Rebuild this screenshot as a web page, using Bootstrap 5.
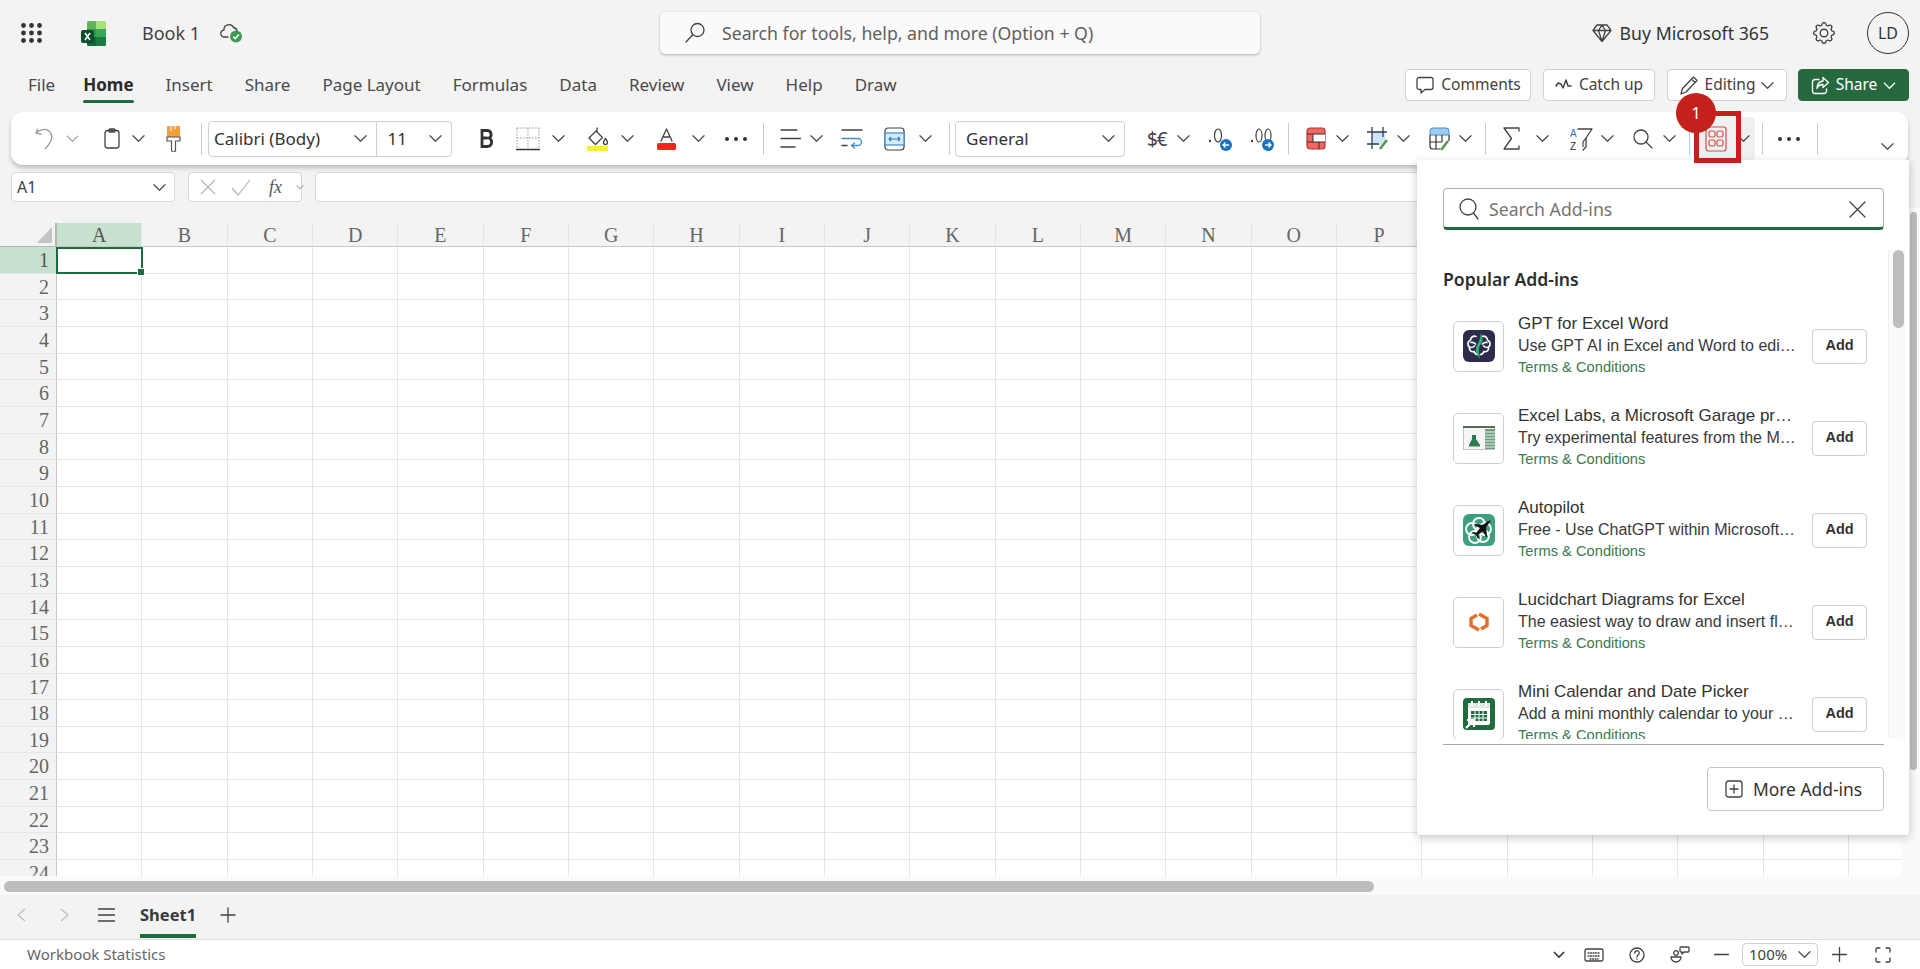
<!DOCTYPE html>
<html lang="en">
<head>
    <meta charset="UTF-8">
    <title>Book 1 - Excel</title>
    <link href="https://cdn.jsdelivr.net/npm/bootstrap@5.3.3/dist/css/bootstrap.min.css" rel="stylesheet">
    <style>
        body {
            width: 1920px;
            height: 969px;
            overflow: hidden;
            background: #f3f3f3;
            color: #424242;
            font-family: "Noto Sans", "Open Sans", sans-serif;
            font-size: 17px;
            position: relative;
        }

        svg { flex: none; display: block; }
        .ic { fill: none; stroke: #424242; stroke-width: 1.3; stroke-linecap: round; stroke-linejoin: round; }
        .ic-muted { stroke: #9a9a9a; }
        .chev { width: 13px; height: 13px; }
        .sep { width: 1px; height: 32px; background: #c8c8c8; }

        /* title bar */
        .titlebar { height: 66px; padding-left: 21px; padding-right: 11px; }
        .excel-logo { margin-left: 39px; }
        .book-name { font-size: 18px; margin-left: 35px; margin-right: 20px; }
        .title-left { width: 639px; }
        .global-search {
            width: 600px;
            height: 42px;
            background: #fafafa;
            border-radius: 5px;
            box-shadow: 0 1px 3px rgba(0, 0, 0, .28);
            padding-left: 24px;
            color: #616161;
            font-size: 17.7px;
        }
        .buy { font-size: 17.7px; margin-right: 44px; color: #333; }
        .avatar {
            width: 42px;
            height: 42px;
            border: 1px solid #333;
            border-radius: 50%;
            margin-left: 32px;
            font-size: 16px;
            color: #333;
        }

        /* tabs row */
        .tabrow { height: 46px; padding: 0 11px 8px 28px; }
        .tab { position: relative; margin-right: 32px; line-height: 34px; color: #4a4a4a; }
        .tab:first-child { margin-right: 28px; }
        .tab.active { font-weight: 700; color: #2b2b2b; }
        .tab.active::after {
            content: "";
            position: absolute;
            left: 0;
            right: 0;
            bottom: -1px;
            height: 3px;
            border-radius: 2px;
            background: #1f6b3f;
        }
        .btn-bar {
            height: 32px;
            padding: 0;
            background: #fff;
            border: 1px solid #d1d1d1;
            border-radius: 4px;
            font-size: 15.5px;
            color: #424242;
            gap: 6px;
        }
        .btn-comments { width: 126px; }
        .btn-catch { width: 112px; margin-left: 12px; }
        .btn-editing { width: 120px; margin-left: 12px; }
        .btn-share { width: 111px; margin-left: 11px; background: #27693f; border-color: #27693f; color: #fff; }
        .btn-share:hover { background: #27693f; color: #fff; }
        .btn-share .ic { stroke: #fff; }

        /* ribbon */
        .ribbon {
            display: grid;
            grid-template-columns: 31px 38px 28px 34px 35px 7px 272px 36px 36px 35px 34px 36px 35px 32px 39px 17px 30px 31px 43px 35px 30px 6px 192px 30px 31px 42px 38px 18px 30px 31px 30px 32px 30px 26px 18px 33px 34px 31px 32px 30px 26px 16px 32px 25px 15px 40px 64px 20px;
            align-items: center;
            justify-items: start;
            margin-left: 11px;
            width: 1897px;
            height: 53px;
            padding-left: 24px;
            background: #fff;
            border-radius: 12px;
            box-shadow: 0 3px 4px rgba(0, 0, 0, .22);
        }
        .combo {
            height: 36px;
            background: #fff;
            border: 1px solid #cfcfcf;
            border-radius: 4px;
            color: #333;
        }
        .font-combo { width: 244px; }
        .font-combo > div { padding: 0 9px 0 5px; }
        .font-name { width: 169px; border-right: 1px solid #cfcfcf; }
        .font-size { width: 75px; padding-left: 11px !important; }
        .num-combo { width: 170px; padding: 0 9px 0 10px; }
        .hover-tile {
            grid-column: span 2;
            margin-left: -7px;
            width: 57px;
            height: 43px;
            padding-left: 7px;
            gap: 10px;
            background: #f0f0f0;
            border-radius: 4px;
        }
        .ribbon-text { font-size: 19px; line-height: 20px; letter-spacing: -1px; color: #424242; }

        /* formula bar */
        .formula { margin-top: 7px; height: 30px; padding-left: 11px; gap: 13px; }
        .fbox {
            height: 30px;
            background: #fff;
            border: 1px solid #d6d6d6;
            border-radius: 4px;
            font-size: 16px;
        }
        .namebox { width: 164px; padding: 0 8px 0 5px; }
        .fxbox { width: 114px; padding: 0 4px 0 10px; gap: 14px; color: #555; }
        .formula-input { flex: 1; margin-right: 12px; }
        .fx { font-family: "Liberation Serif", serif; font-style: italic; font-size: 18px; margin-left: 4px; }

        /* sheet */
        .workarea { margin-top: 6px; height: 668px; }
        .grid-col { width: 1901px; padding-top: 15px; position: relative; }
        .vstrip { width: 19px; background: #fafafa; padding: 4px 2px 0 9px; }
        .vthumb { width: 7px; height: 558px; background: #bdbdbd; border-radius: 4px; }
        .sheet {
            display: grid;
            grid-template-columns: 57px repeat(22, 85.33px);
            grid-template-rows: 24px repeat(24, 26.67px);
            height: 653px;
            overflow: hidden;
            font-family: "Liberation Serif", serif;
            font-size: 20px;
            color: #666;
        }
        .sheet > div { box-sizing: border-box; }
        .corner { position: relative; border-right: 2px solid #b5b5b5; border-bottom: 1px solid #b5b5b5; }
        .corner::before {
            content: "";
            position: absolute;
            right: -2px;
            top: -15px;
            height: 15px;
            border-right: 2px solid #b5b5b5;
        }
        .corner::after {
            content: "";
            position: absolute;
            left: 37px;
            top: 4px;
            border-left: 15px solid transparent;
            border-bottom: 16px solid #c4c4c4;
        }
        .col-h { text-align: center; line-height: 24px; border-bottom: 1px solid #c8c8c8; border-right: 1px solid #e6e6e6; }
        .row-h { text-align: right; padding-right: 7px; line-height: 27px; border-right: 1px solid #c8c8c8; border-bottom: 1px solid #e6e6e6; }
        .cell { background: #fff; border-right: 1px solid #e6e6e6; border-bottom: 1px solid #e6e6e6; }
        .sel-h { background: #c6e2cf; color: #555; }
        .cell.sel { border: 2px solid #1f6b3f; position: relative; margin: 0 -1px 0 -1px; }
        .cell.sel::after {
            content: "";
            position: absolute;
            right: -4px;
            bottom: -4px;
            width: 6px;
            height: 6px;
            background: #1f6b3f;
            border: 1px solid #fff;
            box-sizing: content-box;
        }
        .hstrip { height: 19px; background: #fafafa; padding: 5px 0 0 4px; }
        .hthumb { width: 1370px; height: 11px; background: #bdbdbd; border-radius: 6px; }

        /* sheet tabs and status bar */
        .sheetbar { height: 44px; padding: 0 0 4px 17px; }
        .sheet-next { margin-left: 34px; }
        .sheet-menu { margin-left: 29px; }
        .sheet-add { margin-left: 24px; }
        .sheet-tab { position: relative; font-weight: 700; font-size: 16.5px; line-height: 34px; margin-left: 25px; color: #3a3a3a; }
        .sheet-tab::after {
            content: "";
            position: absolute;
            left: 0;
            right: 0;
            bottom: -6px;
            height: 4px;
            background: #1f6b3f;
        }
        .statusbar {
            height: 30px;
            background: #fff;
            border-top: 1px solid #dedede;
            padding-left: 27px;
            font-size: 15px;
            color: #666;
        }
        .st-kb { margin-left: 19px; }
        .st-help, .st-people { margin-left: 25px; }
        .st-minus { margin-left: 24px; }
        .st-plus { margin-left: 14px; }
        .st-full { margin: 0 29px 0 28px; }
        .zoom-box {
            width: 76px;
            height: 23px;
            margin-left: 13px;
            border: 1px solid #d1d1d1;
            border-radius: 4px;
            padding: 0 6px;
            font-size: 15px;
            color: #424242;
        }

        /* add-ins panel */
        .addin-panel {
            position: absolute;
            left: 1417px;
            top: 160px;
            width: 492px;
            height: 675px;
            background: #fff;
            border-radius: 0 0 4px 4px;
            box-shadow: 0 3px 10px rgba(0, 0, 0, .22);
            z-index: 5;
            padding-top: 28px;
        }
        .panel-search {
            margin: 0 25px 0 26px;
            height: 42px;
            border: 1px solid #b4b4b4;
            border-bottom: 3px solid #1f6b3f;
            border-radius: 4px;
            padding: 2px 17px 0 15px;
            color: #757575;
            font-size: 17.7px;
            gap: 10px;
        }
        .addin-scroll { height: 489px; margin-top: 20px; }
        .addin-list { width: 471px; overflow: hidden; }
        .addin-track { width: 17px; background: #fafafa; border-left: 1px solid #efefef; padding: 0 1px 0 4px; }
        .addin-thumb { width: 11px; height: 78px; background: #bdbdbd; border-radius: 6px; }
        .addin-head { font-size: 17.6px; font-weight: 600; color: #2e2e2e; padding: 17px 0 0 26px; height: 50px; line-height: 24px; }
        .addin {
            height: 92px;
            padding-left: 36px;
            gap: 14px;
            font-family: "Liberation Sans", Arial, sans-serif;
        }
        .addin-icon {
            width: 51px;
            height: 51px;
            border: 1.5px solid #cfcfcf;
            border-radius: 5px;
            background: #fff;
        }
        .addin-text { width: 280px; margin-top: -3px; white-space: nowrap; }
        .addin-title { font-size: 17px; line-height: 23px; color: #333; }
        .addin-desc { font-size: 16px; line-height: 22px; color: #3a3a3a; }
        .addin-terms { font-size: 14.7px; line-height: 21px; color: #3b7a54; }
        .btn-add {
            width: 55px;
            height: 35px;
            padding: 0;
            background: #fff;
            border: 1.5px solid #cfcfcf;
            border-radius: 4px;
            font-size: 14.5px;
            font-weight: 700;
            color: #333;
        }
        .panel-rule { margin: 5px 25px 0 26px; border-top: 1px solid #a8a8a8; }
        .btn-more {
            width: 177px;
            height: 44px;
            margin: 22px 25px 0 auto;
            padding: 0 4px 0 0;
            gap: 10px;
            background: #fff;
            border: 1px solid #c4c4c4;
            border-radius: 4px;
            font-size: 17.4px;
            color: #333;
        }

        /* step marker */
        .step-box {
            position: absolute;
            left: 1694px;
            top: 111px;
            width: 47px;
            height: 52px;
            border: 5px solid #c4201c;
            z-index: 6;
        }
        .step-num {
            position: absolute;
            left: 1676px;
            top: 93px;
            width: 40px;
            height: 40px;
            border-radius: 50%;
            background: #c4201c;
            color: #fff;
            font-size: 17px;
            z-index: 7;
        }
    </style>
</head>
<body>

<svg width="0" height="0" class="position-absolute">
    <symbol id="chev" viewBox="0 0 14 14"><path d="M1 4l6 6 6-6" fill="none" stroke="#4a4a4a" stroke-width="1.3" stroke-linecap="round" stroke-linejoin="round"/></symbol>
</svg>

<header class="titlebar d-flex align-items-center">
    <div class="title-left d-flex align-items-center">
        <svg width="21" height="20" viewBox="0 0 21 20" fill="#333">
            <circle cx="2.5" cy="2.5" r="2.4"/><circle cx="10.5" cy="2.5" r="2.4"/><circle cx="18.5" cy="2.5" r="2.4"/>
            <circle cx="2.5" cy="10" r="2.4"/><circle cx="10.5" cy="10" r="2.4"/><circle cx="18.5" cy="10" r="2.4"/>
            <circle cx="2.5" cy="17.5" r="2.4"/><circle cx="10.5" cy="17.5" r="2.4"/><circle cx="18.5" cy="17.5" r="2.4"/>
        </svg>
        <svg class="excel-logo" width="26" height="25" viewBox="0 0 26 25">
            <path d="M6 1.500A1.500 1.500 0 0 1 7.500 0H15v8H6z" fill="#5fb35a"/>
            <path d="M15 0h8.500A1.500 1.500 0 0 1 25 1.500V8H15z" fill="#a6e07a"/>
            <rect x="6" y="8" width="9" height="8" fill="#2f9a52"/>
            <rect x="15" y="8" width="10" height="8" fill="#3ba85a"/>
            <path d="M6 16h9v9H7.500A1.500 1.500 0 0 1 6 23.500z" fill="#15663a"/>
            <path d="M15 16h10v7.500a1.500 1.500 0 0 1-1.500 1.500H15z" fill="#1a7a42"/>
            <rect x="0" y="9" width="13" height="13" rx="2" fill="#0c4f2b"/>
            <path d="M4 12l5 7M9 12l-5 7" stroke="#fff" stroke-width="1.600"/>
        </svg>
        <span class="book-name">Book 1</span>
        <svg width="23" height="20" viewBox="0 0 23 20">
            <path class="ic" d="M8 14H4.500a3.500 3.500 0 0 1-.5-7A5 5 0 0 1 13.500 4.500 4 4 0 0 1 17 8"/>
            <circle cx="16" cy="13.500" r="6" fill="#3f9a55"/>
            <path d="M13.300 13.700l2 1.900 3.600-4" fill="none" stroke="#fff" stroke-width="1.500"/>
        </svg>
    </div>
    <div class="global-search d-flex align-items-center gap-3">
        <svg class="ic" width="22" height="22" viewBox="0 0 22 22"><circle cx="13.500" cy="8" r="6.500"/><path d="M8.800 12.700L2 20"/></svg>
        <span>Search for tools, help, and more (Option + Q)</span>
    </div>
    <div class="ms-auto d-flex align-items-center">
        <svg class="ic me-2" width="20" height="20" viewBox="0 0 20 20"><path d="M5 2h10l4 5.500L10 18.500 1 7.500zM1 7.500h18M6.500 7.500L10 18.500l3.500-11M6.500 7.500L10 2l3.500 5.500"/></svg>
        <span class="buy">Buy Microsoft 365</span>
        <svg width="22" height="22" viewBox="0 0 16 16" fill="#424242">
            <path d="M8 4.754a3.246 3.246 0 1 0 0 6.492 3.246 3.246 0 0 0 0-6.492zM5.754 8a2.246 2.246 0 1 1 4.492 0 2.246 2.246 0 0 1-4.492 0z"/>
            <path d="M9.796 1.343c-.527-1.790-3.065-1.790-3.592 0l-.094.319a.873.873 0 0 1-1.255.520l-.292-.160c-1.640-.892-3.433.902-2.540 2.541l.159.292a.873.873 0 0 1-.520 1.255l-.319.094c-1.790.527-1.790 3.065 0 3.592l.319.094a.873.873 0 0 1 .520 1.255l-.160.292c-.892 1.640.901 3.434 2.541 2.540l.292-.159a.873.873 0 0 1 1.255.520l.094.319c.527 1.790 3.065 1.790 3.592 0l.094-.319a.873.873 0 0 1 1.255-.520l.292.160c1.640.893 3.434-.902 2.540-2.541l-.159-.292a.873.873 0 0 1 .520-1.255l.319-.094c1.790-.527 1.790-3.065 0-3.592l-.319-.094a.873.873 0 0 1-.520-1.255l.160-.292c.893-1.640-.902-3.433-2.541-2.540l-.292.159a.873.873 0 0 1-1.255-.520l-.094-.319zm-2.633.283c.246-.835 1.428-.835 1.674 0l.094.319a1.873 1.873 0 0 0 2.693 1.115l.291-.160c.764-.415 1.600.420 1.184 1.185l-.159.292a1.873 1.873 0 0 0 1.116 2.692l.318.094c.835.246.835 1.428 0 1.674l-.319.094a1.873 1.873 0 0 0-1.115 2.693l.160.291c.415.764-.420 1.600-1.185 1.184l-.291-.159a1.873 1.873 0 0 0-2.693 1.116l-.094.318c-.246.835-1.428.835-1.674 0l-.094-.319a1.873 1.873 0 0 0-2.692-1.115l-.292.160c-.764.415-1.600-.420-1.184-1.185l.159-.291A1.873 1.873 0 0 0 1.945 8.930l-.319-.094c-.835-.246-.835-1.428 0-1.674l.319-.094A1.873 1.873 0 0 0 3.060 4.377l-.160-.292c-.415-.764.420-1.600 1.185-1.184l.292.159a1.873 1.873 0 0 0 2.692-1.115l.094-.319z"/>
        </svg>
        <div class="avatar d-flex align-items-center justify-content-center">LD</div>
    </div>
</header>

<div class="tabrow d-flex align-items-center">
    <span class="tab">File</span>
    <span class="tab active">Home</span>
    <span class="tab">Insert</span>
    <span class="tab">Share</span>
    <span class="tab">Page Layout</span>
    <span class="tab">Formulas</span>
    <span class="tab">Data</span>
    <span class="tab">Review</span>
    <span class="tab">View</span>
    <span class="tab">Help</span>
    <span class="tab">Draw</span>
    <div class="ms-auto d-flex align-items-center">
        <button class="btn btn-bar btn-comments d-flex align-items-center justify-content-center">
            <svg class="ic" width="20" height="20" viewBox="0 0 20 20"><path d="M4 2.500h12a2 2 0 0 1 2 2v8a2 2 0 0 1-2 2h-6l-4 3.500v-3.500H4a2 2 0 0 1-2-2v-8a2 2 0 0 1 2-2z"/></svg>
            Comments
        </button>
        <button class="btn btn-bar btn-catch d-flex align-items-center justify-content-center">
            <svg class="ic" width="18" height="14" viewBox="0 0 18 14"><path d="M1 8l2-3 3 1 2 4 3-8 2 6h3" stroke-width="1.500"/></svg>
            Catch up
        </button>
        <button class="btn btn-bar btn-editing d-flex align-items-center justify-content-center">
            <svg class="ic" width="19" height="20" viewBox="0 0 19 20"><path d="M13.500 2l3.500 3.500L6 17l-5 2 1.500-5.500zM11.500 4l3.500 3.500"/></svg>
            Editing
            <svg class="chev"><use href="#chev"/></svg>
        </button>
        <button class="btn btn-bar btn-share d-flex align-items-center justify-content-center">
            <svg class="ic" width="19" height="19" viewBox="0 0 19 19"><path d="M8 3.500H4a2.500 2.500 0 0 0-2.500 2.500v9A2.500 2.500 0 0 0 4 17.500h9a2.500 2.500 0 0 0 2.500-2.500v-2M12 1.500l5.500 5-5.500 5V8.500c-3 0-5 1-6 4 0-4 2-7 6-7.500z"/></svg>
            Share
            <svg class="chev" viewBox="0 0 14 14"><path d="M1 4l6 6 6-6" fill="none" stroke="#fff" stroke-width="1.300"/></svg>
        </button>
    </div>
</div>

<div class="ribbon">
    <svg class="ic ic-muted" width="19" height="23" viewBox="0 0 19 23"><path d="M1 6l1.500-4M1 6l5 1M1.500 5.500C5 2.500 11 1 14.500 4.500c4 4 2.500 10-4 17"/></svg>
    <svg class="chev" viewBox="0 0 14 14"><path d="M1 4l6 6 6-6" fill="none" stroke="#aaa" stroke-width="1.300"/></svg>
    <svg class="ic" width="16" height="21" viewBox="0 0 16 21"><rect x="1" y="2.500" width="14" height="17.500" rx="2.500"/><rect x="5" y="1" width="6" height="3" rx="1"/></svg>
    <svg class="chev"><use href="#chev"/></svg>
    <svg width="15" height="27" viewBox="0 0 15 27">
        <path d="M1 1h13v11H1z" fill="#f0a03c"/><path d="M5 1v5M9 1v3" stroke="#fff" stroke-width="1"/>
        <path d="M1 12h13v4H9.500v9a2 2 0 0 1-4 0v-9H1z" fill="#fff" stroke="#555" stroke-width="1.200"/>
    </svg>
    <div class="sep"></div>
    <div class="combo font-combo d-flex">
        <div class="font-name d-flex align-items-center justify-content-between">Calibri (Body)<svg class="chev"><use href="#chev"/></svg></div>
        <div class="font-size d-flex align-items-center justify-content-between">11<svg class="chev"><use href="#chev"/></svg></div>
    </div>
    <svg width="14" height="19" viewBox="0 0 14 19"><path d="M2 1.500h5.500a4 4 0 0 1 1.500 7.500 4.500 4.500 0 0 1-1 8.500H2z M2 9h5.500" fill="none" stroke="#333" stroke-width="2.800"/></svg>
    <svg width="24" height="24" viewBox="0 0 24 24">
        <path d="M1 1h22M1 1v20M23 1v20M12 1v20M1 11h22" stroke="#999" stroke-width="1" stroke-dasharray="1.500 1.500" fill="none"/>
        <path d="M0 22.500h24" stroke="#333" stroke-width="1.500"/>
    </svg>
    <svg class="chev"><use href="#chev"/></svg>
    <svg width="21" height="25" viewBox="0 0 21 25">
        <path class="ic" d="M10 2v4M9 5l-7 7 6.500 6.500 7-7zM18.500 12.500c1.500 2 2 3 2 4a2 2 0 0 1-4 0c0-1 .5-2 2-4z"/>
        <rect x="0" y="20" width="21" height="5" fill="#f4ee3c"/>
    </svg>
    <svg class="chev"><use href="#chev"/></svg>
    <svg width="19" height="23" viewBox="0 0 19 23">
        <path class="ic" d="M4 14l5.500-12L15 14M6 10h7"/>
        <rect x="0" y="16" width="19" height="7" rx="1.500" fill="#e8291c"/>
    </svg>
    <svg class="chev"><use href="#chev"/></svg>
    <svg width="24" height="6" viewBox="0 0 24 6" fill="#333"><circle cx="3" cy="3" r="2"/><circle cx="12" cy="3" r="2"/><circle cx="21" cy="3" r="2"/></svg>
    <div class="sep"></div>
    <svg class="ic" width="21" height="21" viewBox="0 0 21 21"><path d="M1 2h16M1 10.500h20M1 19h14"/></svg>
    <svg class="chev"><use href="#chev"/></svg>
    <svg width="22" height="21" viewBox="0 0 22 21" fill="none" stroke-linecap="round">
        <path d="M1 2h20" stroke="#424242" stroke-width="1.300"/>
        <path d="M1 10.500h16a3.500 3.500 0 0 1 0 7h-6M13.500 15l-3 2.500 3 2.500" stroke="#3d8ccf" stroke-width="1.300"/>
        <path d="M1 17.500h5" stroke="#424242" stroke-width="1.300"/>
    </svg>
    <svg width="21" height="24" viewBox="0 0 21 24" fill="none">
        <rect x="1" y="1" width="19" height="22" rx="3" stroke="#424242" stroke-width="1.200"/>
        <rect x="1" y="6" width="19" height="12" fill="#d5e8f8" stroke="#3d8ccf" stroke-width="1.200"/>
        <path d="M5 12h11M5 12l2-2M5 12l2 2M16 12l-2-2M16 12l-2 2" stroke="#2d78bd" stroke-width="1.200"/>
    </svg>
    <svg class="chev"><use href="#chev"/></svg>
    <div class="sep"></div>
    <div class="combo num-combo d-flex align-items-center justify-content-between">General<svg class="chev"><use href="#chev"/></svg></div>
    <span class="ribbon-text">$€</span>
    <svg class="chev"><use href="#chev"/></svg>
    <svg width="24" height="24" viewBox="0 0 24 24">
        <circle cx="2" cy="14" r="1.200" fill="#424242"/>
        <ellipse cx="10" cy="8.500" rx="3.500" ry="6.500" fill="none" stroke="#424242" stroke-width="1.200"/>
        <circle cx="18" cy="18" r="6" fill="#1a73c0"/>
        <path d="M21 18h-6M17.500 15.500L15 18l2.500 2.500" fill="none" stroke="#fff" stroke-width="1.300"/>
    </svg>
    <svg width="24" height="24" viewBox="0 0 24 24">
        <circle cx="2" cy="14" r="1.200" fill="#424242"/>
        <ellipse cx="9" cy="8.500" rx="3" ry="6.500" fill="none" stroke="#424242" stroke-width="1.200"/>
        <ellipse cx="18" cy="8.500" rx="3" ry="6.500" fill="none" stroke="#424242" stroke-width="1.200"/>
        <circle cx="18" cy="18" r="6" fill="#1a73c0"/>
        <path d="M15 18h6M18.500 15.500L21 18l-2.500 2.500" fill="none" stroke="#fff" stroke-width="1.300"/>
    </svg>
    <div class="sep"></div>
    <svg width="20" height="23" viewBox="0 0 20 23">
        <rect x="1" y="1" width="18" height="21" rx="3" fill="#f6645f" stroke="#a83a36" stroke-width="1.200"/>
        <rect x="7" y="7" width="12" height="8" fill="#fff"/>
        <path d="M1 7h18M1 15h18M7 7v8M13 15v7" stroke="#333" stroke-width="1"/>
    </svg>
    <svg class="chev"><use href="#chev"/></svg>
    <svg width="22" height="24" viewBox="0 0 22 24">
        <rect x="5" y="5" width="13" height="13" fill="#cfe4f7"/>
        <path d="M5 0v22M16 0v10M0 5h20M0 17h12" stroke="#2f3e55" stroke-width="1.300" fill="none"/>
        <path d="M13 22l7-9" stroke="#4a9a45" stroke-width="2.400"/>
    </svg>
    <svg class="chev"><use href="#chev"/></svg>
    <svg width="21" height="24" viewBox="0 0 21 24">
        <path d="M1 4a3 3 0 0 1 3-3h13a3 3 0 0 1 3 3v4H1z" fill="#9fcdf0" stroke="#3d8ccf"/>
        <path d="M20 8v6M1 8v11a3 3 0 0 0 3 3h7M1 15h12M7 8v14M13 8v7" stroke="#333" stroke-width="1.200" fill="none"/>
        <path d="M12 23l7-9" stroke="#4a9a45" stroke-width="2.400"/>
    </svg>
    <svg class="chev"><use href="#chev"/></svg>
    <div class="sep"></div>
    <svg class="ic" width="17" height="23" viewBox="0 0 17 23"><path d="M16 4V1H1l7.500 10.500L1 22h15v-3"/></svg>
    <svg class="chev"><use href="#chev"/></svg>
    <svg width="23" height="24" viewBox="0 0 23 24" fill="none">
        <path class="ic" d="M8 2h14l-6 9v9l-3 3"/>
        <path d="M16 11l-3 4v5" stroke="#424242" stroke-width="1.200"/>
        <text x="0" y="10" font-size="10" font-family="Liberation Sans, sans-serif" fill="#2d78bd">A</text>
        <text x="0" y="23" font-size="10" font-family="Liberation Sans, sans-serif" fill="#333">Z</text>
    </svg>
    <svg class="chev"><use href="#chev"/></svg>
    <svg class="ic" width="20" height="20" viewBox="0 0 20 20"><circle cx="8" cy="8" r="7"/><path d="M13 13l6 6"/></svg>
    <svg class="chev"><use href="#chev"/></svg>
    <div class="sep"></div>
    <div class="hover-tile d-flex align-items-center">
        <svg width="22" height="26" viewBox="0 0 22 26" fill="none" stroke="#c9534a" stroke-width="1.200">
            <rect x="1" y="1" width="20" height="24" rx="2.500"/>
            <rect x="4" y="5" width="6" height="6" rx="1.500"/><rect x="12" y="5" width="6" height="6" rx="1.500"/>
            <rect x="4" y="14" width="6" height="6" rx="1.500"/><rect x="12" y="14" width="6" height="6" rx="1.500"/>
        </svg>
        <svg class="chev"><use href="#chev"/></svg>
    </div>
    <div class="sep"></div>
    <svg width="24" height="6" viewBox="0 0 24 6" fill="#333"><circle cx="3" cy="3" r="2"/><circle cx="12" cy="3" r="2"/><circle cx="21" cy="3" r="2"/></svg>
    <div class="sep"></div>
    <svg class="chev mt-3"><use href="#chev"/></svg>
</div>

<div class="formula d-flex">
    <div class="fbox namebox d-flex align-items-center justify-content-between">A1<svg class="chev"><use href="#chev"/></svg></div>
    <div class="fbox fxbox d-flex align-items-center">
        <svg width="18" height="18" viewBox="0 0 18 18"><path d="M2 2l14 14M16 2L2 16" stroke="#b4b4b4" stroke-width="1.200"/></svg>
        <svg width="20" height="18" viewBox="0 0 20 18"><path d="M1 10l6 7L19 2" fill="none" stroke="#b4b4b4" stroke-width="1.200"/></svg>
        <span class="fx">fx</span>
        <svg class="ms-auto" width="8" height="8" viewBox="0 0 14 14"><path d="M1 4l6 6 6-6" fill="none" stroke="#aaa" stroke-width="2"/></svg>
    </div>
    <div class="fbox formula-input"></div>
</div>

<div class="workarea d-flex">
    <div class="grid-col">
        <div class="sheet" id="sheet"><div class="corner"></div></div>
    </div>
    <div class="vstrip"><div class="vthumb"></div></div>
</div>
<div class="hstrip"><div class="hthumb"></div></div>

<div class="sheetbar d-flex align-items-center">
    <svg width="9" height="14" viewBox="0 0 9 14"><path d="M8 1L1 7l7 6" fill="none" stroke="#bdbdbd" stroke-width="1.300"/></svg>
    <svg class="sheet-next" width="9" height="14" viewBox="0 0 9 14"><path d="M1 1l7 6-7 6" fill="none" stroke="#bdbdbd" stroke-width="1.300"/></svg>
    <svg class="ic sheet-menu" width="17" height="14" viewBox="0 0 17 14"><path d="M0.500 1h16M0.500 7h16M0.500 13h16"/></svg>
    <span class="sheet-tab">Sheet1</span>
    <svg class="ic sheet-add" width="16" height="16" viewBox="0 0 16 16"><path d="M8 1v14M1 8h14"/></svg>
</div>

<footer class="statusbar d-flex align-items-center">
    <span>Workbook Statistics</span>
    <div class="ms-auto d-flex align-items-center">
        <svg width="12" height="9" viewBox="0 0 14 10"><path d="M1 2l6 6 6-6" fill="none" stroke="#333" stroke-width="1.800"/></svg>
        <svg class="ic st-kb" width="20" height="14" viewBox="0 0 20 14"><rect x="1" y="1" width="18" height="12" rx="1.500"/><path d="M4 5h12M4 8h12M6 11h8" stroke-dasharray="1 1.500"/></svg>
        <svg class="ic st-help" width="16" height="16" viewBox="0 0 16 16"><circle cx="8" cy="8" r="7"/><path d="M5.800 6a2.200 2.200 0 1 1 3.400 1.800C8.400 8.400 8 8.800 8 10M8 12v.2"/></svg>
        <svg class="ic st-people" width="20" height="17" viewBox="0 0 20 17"><circle cx="6" cy="7" r="2.300"/><path d="M1 11h10a5 5 0 0 1-10 0zM11 1h7a1 1 0 0 1 1 1v3a1 1 0 0 1-1 1h-4l-2 2V6h-1a1 1 0 0 1-1-1V2a1 1 0 0 1 1-1z"/></svg>
        <svg class="ic st-minus" width="15" height="3" viewBox="0 0 15 3"><path d="M0.500 1.500h14"/></svg>
        <div class="zoom-box d-flex align-items-center justify-content-between">100%<svg class="chev"><use href="#chev"/></svg></div>
        <svg class="ic st-plus" width="15" height="15" viewBox="0 0 15 15"><path d="M7.500 0.500v14M0.500 7.500h14"/></svg>
        <svg class="ic st-full" width="16" height="16" viewBox="0 0 16 16"><path d="M1 5V2a1 1 0 0 1 1-1h3M11 1h3a1 1 0 0 1 1 1v3M15 11v3a1 1 0 0 1-1 1h-3M5 15H2a1 1 0 0 1-1-1v-3"/></svg>
    </div>
</footer>

<!-- Add-ins dropdown -->
<aside class="addin-panel">
    <div class="panel-search d-flex align-items-center">
        <svg class="ic" width="20" height="22" viewBox="0 0 20 22"><circle cx="9" cy="9" r="8"/><path d="M14.500 15l4.500 6"/></svg>
        <span>Search Add-ins</span>
        <svg class="ic ms-auto" width="17" height="17" viewBox="0 0 17 17"><path d="M1 1l15 15M16 1L1 16"/></svg>
    </div>
    <div class="addin-scroll d-flex">
        <div class="addin-list">
            <div class="addin-head">Popular Add-ins</div>

            <div class="addin d-flex align-items-center">
                <div class="addin-icon d-flex align-items-center justify-content-center">
                    <svg width="32" height="32" viewBox="0 0 32 32">
                        <rect width="32" height="32" rx="6" fill="#2b2d4a"/>
                        <g fill="none" stroke="#fff" stroke-width="1.700" stroke-linecap="round">
                            <path d="M13 6.500c-3-1-5.500 1-5.500 3.500-3 1.500-3.500 5-1 7-1 3 2 5.500 4.500 4.500 1 2 2 3 3.500 3"/>
                            <path d="M8 12.500c2-.5 3.500.5 4.500 1.500M7.500 17.500c2 0 3-.5 4-1.500"/>
                            <path d="M19 6.500c3-1 5.500 1 5.500 3.500 3 1.500 3.500 5 1 7 1 3-2 5.500-4.500 4.500-1 2-2 3-3.500 3"/>
                            <path d="M24 12.500c-2-.5-3.500.5-4.500 1.500M24.500 17.500c-2 0-3-.5-4-1.500"/>
                        </g>
                        <path d="M18 3c1 4 3 7 0 11-3 3.500-2.500 8-1 15-3-4-6-9-2.500-14.500C17 11 17 7 18 3z" fill="#2fb37e"/>
                    </svg>
                </div>
                <div class="addin-text">
                    <div class="addin-title">GPT for Excel Word</div>
                    <div class="addin-desc">Use GPT AI in Excel and Word to edi…</div>
                    <div class="addin-terms">Terms &amp; Conditions</div>
                </div>
                <button class="btn btn-add">Add</button>
            </div>

            <div class="addin d-flex align-items-center">
                <div class="addin-icon d-flex align-items-center justify-content-center">
                    <svg width="32" height="24" viewBox="0 0 32 24">
                        <rect x=".5" y=".5" width="31" height="23" fill="#f6f6f6" stroke="#c4c4c4"/>
                        <rect width="32" height="2" fill="#5a6b5a"/>
                        <rect x="22" y="3" width="10" height="20" fill="#6f9f7f"/>
                        <path d="M22 6h10M22 9h10M22 12h10M22 15h10M22 18h10M22 21h10" stroke="#e8f0ea" stroke-width="1"/>
                        <path d="M9 9h4v4l4 6a1 1 0 0 1-1 1.500H7a1 1 0 0 1-1-1.500l3-6z" fill="#2c7a4d"/>
                    </svg>
                </div>
                <div class="addin-text">
                    <div class="addin-title">Excel Labs, a Microsoft Garage pr…</div>
                    <div class="addin-desc">Try experimental features from the M…</div>
                    <div class="addin-terms">Terms &amp; Conditions</div>
                </div>
                <button class="btn btn-add">Add</button>
            </div>

            <div class="addin d-flex align-items-center">
                <div class="addin-icon d-flex align-items-center justify-content-center">
                    <svg width="32" height="32" viewBox="0 0 32 32">
                        <rect width="32" height="32" rx="6" fill="#3d9f80"/>
                        <g fill="none" stroke="#fff" stroke-width="1.800">
                            <ellipse cx="16" cy="10" rx="6" ry="6"/><ellipse cx="22" cy="15" rx="6" ry="6"/><ellipse cx="20" cy="22" rx="6" ry="6"/>
                            <ellipse cx="12" cy="23" rx="6" ry="6"/><ellipse cx="9" cy="15" rx="6" ry="6"/>
                        </g>
                        <path d="M25 7l-5 4-8-1-1 1 6 3-4 5-3-1-1 1 4 2 2 4 1-1-1-3 5-4 3 6 1-1-1-9 4-5c1-1 1-2-1-1z" fill="#111"/>
                    </svg>
                </div>
                <div class="addin-text">
                    <div class="addin-title">Autopilot</div>
                    <div class="addin-desc">Free - Use ChatGPT within Microsoft…</div>
                    <div class="addin-terms">Terms &amp; Conditions</div>
                </div>
                <button class="btn btn-add">Add</button>
            </div>

            <div class="addin d-flex align-items-center">
                <div class="addin-icon d-flex align-items-center justify-content-center">
                    <svg width="22" height="22" viewBox="0 0 22 22" fill="none" stroke="#e0702a" stroke-width="3.400">
                        <path d="M11 3l8 4.500v7l-6 3.500"/>
                        <path d="M11 19l-8-4.500v-7l6-3.500"/>
                    </svg>
                </div>
                <div class="addin-text">
                    <div class="addin-title">Lucidchart Diagrams for Excel</div>
                    <div class="addin-desc">The easiest way to draw and insert fl…</div>
                    <div class="addin-terms">Terms &amp; Conditions</div>
                </div>
                <button class="btn btn-add">Add</button>
            </div>

            <div class="addin d-flex align-items-center">
                <div class="addin-icon d-flex align-items-center justify-content-center">
                    <svg width="32" height="32" viewBox="0 0 32 32">
                        <rect width="32" height="32" rx="4" fill="#226b3f"/>
                        <rect x="5" y="5" width="22" height="22" rx="2" fill="#fff"/>
                        <rect x="5" y="5" width="22" height="5" fill="#dfe9e3"/>
                        <path d="M9 3v5M16 3v5M23 3v5" stroke="#fff" stroke-width="2"/>
                        <path d="M8 13h16v10H8z" fill="#226b3f"/>
                        <path d="M8 16.500h16M8 20h16M12 13v10M16 13v10M20 13v10" stroke="#fff"/>
                        <path d="M3 30l8-8M4 22h7v7" fill="none" stroke="#fff" stroke-width="2.200"/>
                    </svg>
                </div>
                <div class="addin-text">
                    <div class="addin-title">Mini Calendar and Date Picker</div>
                    <div class="addin-desc">Add a mini monthly calendar to your …</div>
                    <div class="addin-terms">Terms &amp; Conditions</div>
                </div>
                <button class="btn btn-add">Add</button>
            </div>
        </div>
        <div class="addin-track"><div class="addin-thumb"></div></div>
    </div>
    <div class="panel-rule"></div>
    <button class="btn btn-more d-flex align-items-center justify-content-center">
        <svg class="ic" width="18" height="18" viewBox="0 0 18 18"><rect x="1" y="1" width="16" height="16" rx="2.500"/><path d="M9 5v8M5 9h8"/></svg>
        More Add-ins
    </button>
</aside>

<div class="step-box"></div>
<div class="step-num d-flex align-items-center justify-content-center">1</div>

<script src="https://cdn.jsdelivr.net/npm/bootstrap@5.3.3/dist/js/bootstrap.bundle.min.js"></script>
<script>
    // column letters, row numbers and empty cells
    const sheet = document.getElementById("sheet");
    const letters = "ABCDEFGHIJKLMNOPQRSTUV".split("");

    function addCell(className, text) {
        const el = document.createElement("div");
        el.className = className;
        if (text) el.textContent = text;
        sheet.appendChild(el);
    }

    letters.forEach((l, i) => addCell("col-h" + (i === 0 ? " sel-h" : ""), l));
    for (let r = 1; r <= 24; r++) {
        addCell("row-h" + (r === 1 ? " sel-h" : ""), String(r));
        letters.forEach((l, i) => addCell("cell" + (r === 1 && i === 0 ? " sel" : "")));
    }
</script>
</body>
</html>
